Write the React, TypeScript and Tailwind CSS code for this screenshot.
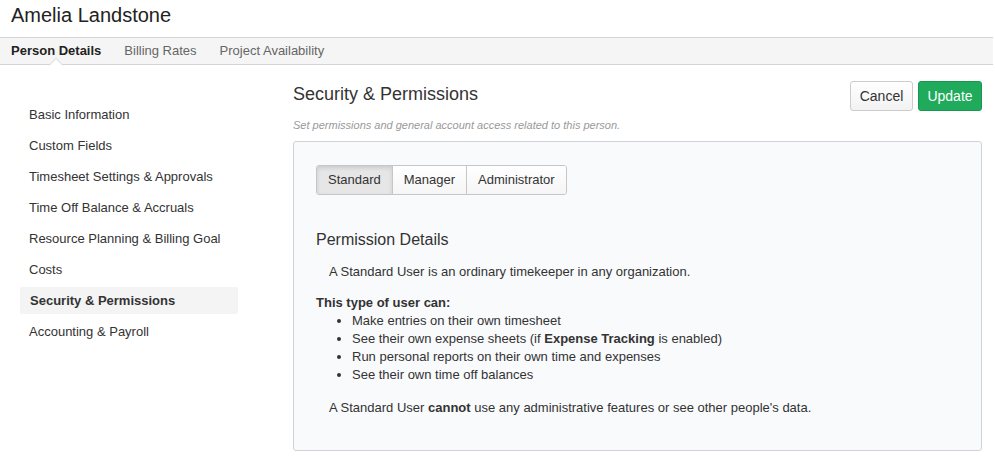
import { useState } from "react";

const sections = [
  "Basic Information",
  "Custom Fields",
  "Timesheet Settings & Approvals",
  "Time Off Balance & Accruals",
  "Resource Planning & Billing Goal",
  "Costs",
  "Security & Permissions",
  "Accounting & Payroll",
];

const roles = ["Standard", "Manager", "Administrator"];

const App = () => {
  const [role, setRole] = useState("Standard");
  const active = "Security & Permissions";

  return (
    <div className="w-[995px] h-[464px] overflow-hidden bg-white text-[#333] font-['Liberation_Sans',Arial,sans-serif]">
      <h1 className="h-[37px] pl-[11px] pt-[3px] text-[20px] leading-[24px] text-[#222]">Amelia Landstone</h1>

      {/* top tabs */}
      <div className="w-[993px] h-[28px] flex items-center gap-[23px] px-[11px] bg-[#f5f5f5] border-y border-[#d4d4d4] text-[13px]">
        <div className="relative h-full flex items-center font-bold text-[#222]">
          Person Details
          <span className="absolute left-1/2 -bottom-px -ml-[7px] w-0 h-0 border-x-[7px] border-x-transparent border-b-[7px] border-b-[#d4d4d4]" />
          <span className="absolute left-1/2 -bottom-px -ml-[6px] w-0 h-0 border-x-[6px] border-x-transparent border-b-[6px] border-b-white" />
        </div>
        <div className="text-[#666]">Billing Rates</div>
        <div className="text-[#666]">Project Availability</div>
      </div>

      <div className="flex">
        {/* side nav */}
        <nav className="w-[238px] pl-[20px] pt-[34px] flex flex-col text-[13px] shrink-0">
          {sections.map((s) => (
            <div
              key={s}
              className={
                s === active
                  ? "h-[27px] my-[2px] pl-[10px] flex items-center bg-[#f4f4f4] rounded-[2px] font-bold text-[#333]"
                  : "h-[31px] pl-[9px] flex items-center text-[#333]"
              }
            >
              {s}
            </div>
          ))}
        </nav>

        {/* main */}
        <main className="flex-1 pl-[55px] pr-[13px] pt-[16px]">
          <div className="flex justify-between items-start">
            <div>
              <h2 className="text-[18px] leading-[24px] text-[#333] pt-[1px]">Security &amp; Permissions</h2>
              <p className="mt-[11px] text-[11px] italic text-[#999]">Set permissions and general account access related to this person.</p>
            </div>
            <div className="flex gap-[5px]">
              <button className="h-[30px] w-[63px] rounded-[3px] border border-[#ccc] bg-gradient-to-b from-white to-[#f2f2f2] text-[14px] text-[#333]">Cancel</button>
              <button className="h-[30px] w-[64px] rounded-[3px] border border-[#16984f] bg-[#1faa5c] text-[14px] text-white">Update</button>
            </div>
          </div>

          <section className="mt-[7px] h-[310px] rounded-[3px] border border-[#cfd2d6] bg-[#f9fafc] px-[22px] pt-[23px]">
            <div className="inline-flex rounded-[3px] border border-[#c6c6c6] overflow-hidden text-[13px]">
              {roles.map((r, i) => (
                <button
                  key={r}
                  onClick={() => setRole(r)}
                  className={
                    (i > 0 ? "border-l border-[#c6c6c6] " : "") +
                    (r === role
                      ? "h-[28px] px-[11px] bg-[#e6e6e6] shadow-[inset_0_2px_4px_rgba(0,0,0,0.12)] text-[#333]"
                      : "h-[28px] px-[11px] bg-gradient-to-b from-white to-[#f5f5f5] text-[#333]")
                  }
                >
                  {r}
                </button>
              ))}
            </div>

            <h3 className="mt-[35px] text-[16px] leading-[20px] text-[#333]">Permission Details</h3>
            <div className="text-[13px] leading-[18px] text-[#333]">
              <p className="mt-[13px] pl-[13px]">A Standard User is an ordinary timekeeper in any organization.</p>
              <p className="mt-[13px] font-bold">This type of user can:</p>
              <ul className="list-disc pl-[36px]">
                <li>Make entries on their own timesheet</li>
                <li>
                  See their own expense sheets (if <b>Expense Tracking</b> is enabled)
                </li>
                <li>Run personal reports on their own time and expenses</li>
                <li>See their own time off balances</li>
              </ul>
              <p className="mt-[15px] pl-[13px]">
                A Standard User <b>cannot</b> use any administrative features or see other people's data.
              </p>
            </div>
          </section>
        </main>
      </div>
    </div>
  );
};

export default App;
